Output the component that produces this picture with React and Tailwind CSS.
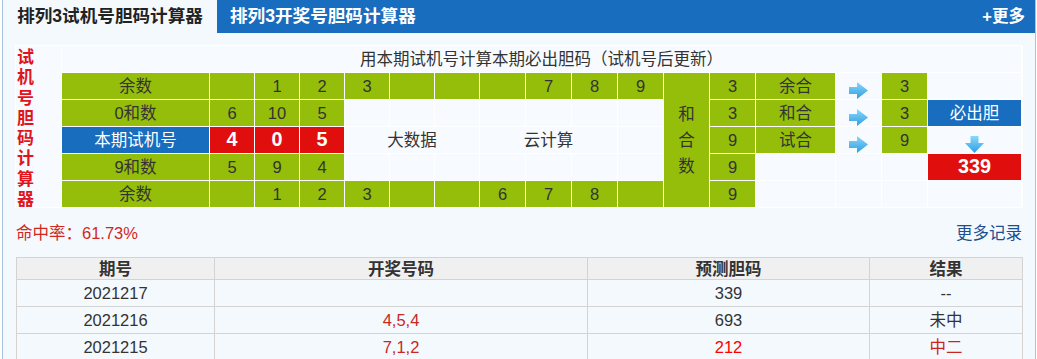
import React from "react";

const font = { fontFamily: '"Liberation Sans", "Noto Sans CJK SC", sans-serif' };

const RightArrow = () => (
    <svg width="19" height="17" viewBox="0 0 19 17">
        <defs>
            <linearGradient id="ra" x1="0" y1="0" x2="0" y2="1">
                <stop offset="0" stopColor="#8ad8fa" />
                <stop offset="1" stopColor="#2f9ee2" />
            </linearGradient>
        </defs>
        <path d="M0 5 H8 V0 L19 8.5 L8 17 V12 H0 Z" fill="url(#ra)" />
    </svg>
);

const DownArrow = () => (
    <svg width="19" height="17" viewBox="0 0 19 17">
        <defs>
            <linearGradient id="da" x1="0" y1="0" x2="0" y2="1">
                <stop offset="0" stopColor="#8ad8fa" />
                <stop offset="1" stopColor="#2f9ee2" />
            </linearGradient>
        </defs>
        <path d="M5.5 0 H13.5 V7 H19 L9.5 17 L0 7 H5.5 Z" fill="url(#da)" />
    </svg>
);

// green cell
const G = ({ children, className = "" }) => (
    <div className={`flex items-center justify-center bg-[#94be0a] text-[#333] ${className}`}>{children}</div>
);

// light (empty) cell
const W = ({ children, className = "" }) => (
    <div className={`flex items-center justify-center bg-[#f7fbff] text-[#333] ${className}`}>{children}</div>
);

const R = ({ children }) => (
    <div className="flex items-center justify-center bg-[#e10e0e] text-[19.8px] font-bold text-white">{children}</div>
);

const history = [
    { qh: "2021217", kj: "", dm: "339", jg: "--" },
    { qh: "2021216", kj: "4,5,4", dm: "693", jg: "未中" },
    { qh: "2021215", kj: "7,1,2", dm: "212", jg: "中二", hit: true },
];

export default function App() {
    return (
        <div className="w-[1037px] bg-white pl-[2px]" style={font}>
            <div className="w-[1034px] border-x border-[#a9c3dc] bg-[#f4f9fe] pb-6">
                {/* tabs */}
                <div className="flex h-[33px] items-center">
                    <div className="flex h-full w-[214px] items-center justify-center text-[17.6px] font-bold text-[#222]">
                        排列3试机号胆码计算器
                    </div>
                    <div className="flex h-full flex-1 items-center justify-between bg-[#186dbf] pl-[13px] pr-[10px] text-white">
                        <span className="text-[17.6px] font-bold">排列3开奖号胆码计算器</span>
                        <span className="text-[16.5px] font-bold">+更多</span>
                    </div>
                </div>

                {/* calculator */}
                <div className="mx-[12px] mt-[12px] grid grid-cols-[45px_147px_44px_44px_44px_44px_44px_44px_45px_45px_45px_45px_45px_45px_79px_45px_45px_93px] grid-rows-[26px_26px_26px_26px_26px_26px] gap-px bg-white p-px text-[16.5px]">
                    <div className="row-span-6 bg-[#f7fbff] pl-px pt-[2px] text-[17px] font-bold leading-[20.3px] text-[#e0141e]">
                        试<br />机<br />号<br />胆<br />码<br />计<br />算<br />器
                    </div>
                    <W className="col-span-17">用本期试机号计算本期必出胆码（试机号后更新）</W>

                    {/* row 1 */}
                    <G>余数</G>
                    <G />
                    <G>1</G>
                    <G>2</G>
                    <G>3</G>
                    <G />
                    <G />
                    <G />
                    <G>7</G>
                    <G>8</G>
                    <G>9</G>
                    <G className="row-span-5 leading-[26px]">
                        <span className="text-center">和<br />合<br />数</span>
                    </G>
                    <G>3</G>
                    <G>余合</G>
                    <W className="items-end"><RightArrow /></W>
                    <G>3</G>
                    <W />

                    {/* row 2 */}
                    <G>0和数</G>
                    <G>6</G>
                    <G>10</G>
                    <G>5</G>
                    <W />
                    <W />
                    <W />
                    <W />
                    <W />
                    <W />
                    <W />
                    <G>3</G>
                    <G>和合</G>
                    <W className="items-end"><RightArrow /></W>
                    <G>3</G>
                    <div className="flex items-center justify-center bg-[#186dbf] text-white">必出胆</div>

                    {/* row 3 */}
                    <div className="flex items-center justify-center bg-[#186dbf] text-white">本期试机号</div>
                    <R>4</R>
                    <R>0</R>
                    <R>5</R>
                    <W className="col-span-3">大数据</W>
                    <W className="col-span-3">云计算</W>
                    <W />
                    <G>9</G>
                    <G>试合</G>
                    <W className="items-end"><RightArrow /></W>
                    <G>9</G>
                    <W className="items-end"><DownArrow /></W>

                    {/* row 4 */}
                    <G>9和数</G>
                    <G>5</G>
                    <G>9</G>
                    <G>4</G>
                    <W />
                    <W />
                    <W />
                    <W />
                    <W />
                    <W />
                    <W />
                    <G>9</G>
                    <W />
                    <W />
                    <W />
                    <R>339</R>

                    {/* row 5 */}
                    <G>余数</G>
                    <G />
                    <G>1</G>
                    <G>2</G>
                    <G>3</G>
                    <G />
                    <G />
                    <G>6</G>
                    <G>7</G>
                    <G>8</G>
                    <G />
                    <G>9</G>
                    <W />
                    <W />
                    <W />
                    <W />
                </div>

                {/* hit rate */}
                <div className="mx-[13px] mt-[15px] flex items-center justify-between text-[16.5px] leading-[20px]">
                    <span className="text-[#d0281e]">命中率：61.73%</span>
                    <span className="text-[#1b4f92]">更多记录</span>
                </div>

                {/* history */}
                <table className="mx-[13px] mt-[14px] w-[1006px] table-fixed border-collapse text-center text-[16.5px] text-[#333]">
                    <colgroup>
                        <col className="w-[198px]" />
                        <col className="w-[373px]" />
                        <col className="w-[282px]" />
                        <col className="w-[153px]" />
                    </colgroup>
                    <thead>
                        <tr className="h-[22px] bg-[#f0f0f0] font-bold leading-[20px]">
                            <th className="border border-[#d3d3d3]">期号</th>
                            <th className="border border-[#d3d3d3]">开奖号码</th>
                            <th className="border border-[#d3d3d3]">预测胆码</th>
                            <th className="border border-[#d3d3d3]">结果</th>
                        </tr>
                    </thead>
                    <tbody>
                        {history.map((row) => (
                            <tr key={row.qh} className="h-[27px] leading-[20px]">
                                <td className="border border-[#d3d3d3]">{row.qh}</td>
                                <td className="border border-[#d3d3d3] text-[#c8281e]">{row.kj}</td>
                                <td className={`border border-[#d3d3d3] ${row.hit ? "text-[#ff0000]" : ""}`}>{row.dm}</td>
                                <td className={`border border-[#d3d3d3] ${row.hit ? "text-[#cc2222]" : ""}`}>{row.jg}</td>
                            </tr>
                        ))}
                    </tbody>
                </table>
            </div>
        </div>
    );
}
